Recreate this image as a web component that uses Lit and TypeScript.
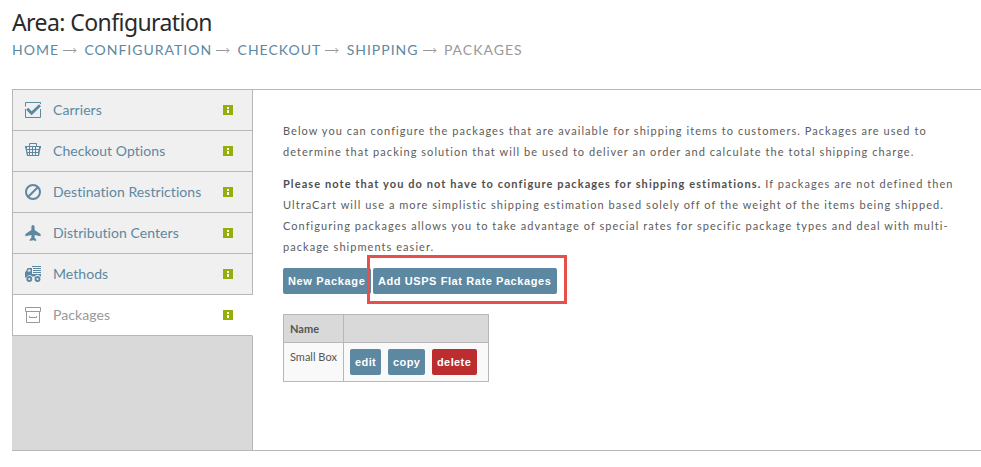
import { customElement, property } from 'lit/decorators.js';
import { classMap } from 'lit/directives/class-map.js';
import { css, html, LitElement, svg, TemplateResult } from 'lit';

const icons: Record<string, TemplateResult> = {
  check: svg`
    <path d="M0.5 4.5V0.5H15.5V2M15.5 7V15.5H0.5V7" fill="none" stroke="currentColor" />
    <path d="M2.2 6.8L6.6 11.2L15 3.2" fill="none" stroke="currentColor" stroke-width="2.8" />
  `,
  basket: svg`
    <path d="M4.5 3V0.5H11.5V3" fill="none" stroke="currentColor" />
    <path
      fill-rule="evenodd"
      fill="currentColor"
      d="M0 3H16V5H15.6L14 13H2L0.4 5H0ZM2 4V6H4V4ZM5 4V6H7V4ZM8 4V6H10V4ZM11 4V6H14V4ZM2 7L2.4 9H4V7ZM5 7V9H7V7ZM8 7V9H10V7ZM11 7V9H13L13.6 7ZM3 10V12H4V10ZM5 10V12H7V10ZM8 10V12H10V10ZM11 10V12H13V10Z"
    />
  `,
  ban: svg`
    <circle cx="8" cy="8" r="7" fill="none" stroke="currentColor" stroke-width="2" />
    <path d="M3.2 12.8L12.8 3.2" stroke="currentColor" stroke-width="2" />
  `,
  plane: svg`
    <path
      fill="currentColor"
      d="M8 0C9 0 9.6 1 9.6 2V5L15.6 9V11.2L9.6 10V12.8L11.2 14.4V16L8 15.2L4.8 16V14.4L6.4 12.8V10L0.4 11.2V9L6.4 5V2C6.4 1 7 0 8 0Z"
    />
  `,
  truck: svg`
    <path
      fill="currentColor"
      fill-rule="evenodd"
      d="M7 0H16V1H7ZM8 2H16V3H8ZM8 4H16V5H8ZM8 6H16V7H8ZM2.6 2H7V8H16V10.5H15.4A3.4 3.4 0 0 0 9.6 10.5H7.2A3.4 3.4 0 0 0 1.4 11.5H0V6L0.8 5.4ZM3.4 3.4L2.4 5.4H5.4V3.4Z"
    />
    <circle cx="4.3" cy="13" r="2" fill="none" stroke="currentColor" stroke-width="1.9" />
    <circle cx="12.5" cy="13" r="2" fill="none" stroke="currentColor" stroke-width="1.9" />
  `,
  box: svg`
    <path
      d="M0.5 0.5H15.5V4.5H0.5ZM1.5 4.5V15.5H14.5V4.5M4.5 9V10.5H11.5V9"
      fill="none"
      stroke="currentColor"
    />
  `,
};

@customElement('menu-item')
export class MenuItem extends LitElement {
  static override styles = css`
    :host {
      display: block;
    }

    .item {
      display: flex;
      align-items: center;
      box-sizing: border-box;
      height: 41px;
      padding: 0 19px 0 12px;
      border: 1px solid #b7b7b7;
      border-top: none;
      background: #f0f0f0;
      color: #5d88a1;
      font-size: 14px;
      letter-spacing: 0.06px;
    }

    .item.active {
      border-right-color: #fff;
      background: #fff;
      color: #999;
    }

    .icon {
      width: 16px;
      height: 16px;
      margin-right: 12px;
    }

    .label {
      flex: 1;
      padding-bottom: 2px;
      white-space: nowrap;
    }

    .info {
      width: 10px;
      height: 10px;
    }
  `;

  @property()
  label: string = '';

  @property()
  icon: string = '';

  @property({ type: Boolean })
  active: boolean = false;

  override render() {
    return html`
      <div class=${classMap({ item: true, active: this.active })}>
        <svg class="icon" viewBox="0 0 16 16">${icons[this.icon]}</svg>
        <span class="label">${this.label}</span>
        <svg class="info" viewBox="0 0 10 10">
          <rect width="10" height="10" fill="#94ae0a" />
          <path d="M4 2H6V4H4ZM4 5H6V8H4Z" fill="#fff" />
        </svg>
      </div>
    `;
  }
}

@customElement('app-root')
export class AppRoot extends LitElement {
  static override styles = css`
    :host {
      display: block;
      height: 467px;
      overflow: hidden;
      background: #fff;
      color: #555;
      font-family: Lato, sans-serif;
    }

    .header {
      height: 89px;
      box-sizing: border-box;
      padding: 7px 0 0 12px;
    }

    .title {
      margin: 0;
      color: #2a2a2a;
      font: 400 23px/30px 'Noto Sans', sans-serif;
      letter-spacing: -0.58px;
    }

    .crumbs {
      display: flex;
      margin-top: 4px;
      font-size: 14px;
      line-height: 18px;
      letter-spacing: 1px;
      color: #999;
    }

    .crumb {
      color: #5d88a1;
    }

    .arrow {
      width: 14px;
      height: 18px;
      margin: 0 7.4px 0 4px;
    }

    .layout {
      display: flex;
      box-sizing: border-box;
      height: 362px;
      margin-left: 12px;
      border-top: 1px solid #b7b7b7;
      border-bottom: 1px solid #b7b7b7;
    }

    .sidebar {
      display: flex;
      flex-direction: column;
      width: 241px;
      flex: none;
    }

    .filler {
      flex: 1;
      border-right: 1px solid #b7b7b7;
      background: #d9d9d9;
    }

    .content {
      padding: 30px 0 0 30px;
      font-size: 11px;
      line-height: 21px;
      letter-spacing: 1.05px;
      white-space: nowrap;
    }

    .text {
      margin: 0 0 11px;
      color: #5c5c5c;
    }

    .text b {
      color: #505050;
      letter-spacing: 1.08px;
    }

    .actions {
      position: relative;
      display: flex;
      gap: 2px;
      margin-bottom: 20px;
    }

    .button {
      height: 26px;
      padding: 0 5px;
      border: none;
      border-radius: 2px;
      background: #5d88a1;
      color: #fff;
      font: bold 11px/26px 'Liberation Sans', sans-serif;
      letter-spacing: 0.65px;
      text-align: left;
      white-space: nowrap;
    }

    .button.danger {
      background: #bb2d2f;
    }

    .new {
      width: 88px;
    }

    .usps {
      width: 184px;
      letter-spacing: 0.58px;
    }

    .edit {
      width: 31px;
    }

    .copy {
      width: 37px;
    }

    .delete {
      width: 45px;
    }

    .row-actions .button {
      letter-spacing: 0.4px;
    }

    .highlight {
      position: absolute;
      left: 84px;
      top: -13px;
      box-sizing: border-box;
      width: 200px;
      height: 49px;
      border: 3px solid #e94f4a;
    }

    .grid {
      border-collapse: collapse;
      letter-spacing: 0;
      line-height: 15px;
      text-align: left;
    }

    .grid th,
    .grid td {
      box-sizing: border-box;
      border: 1px solid #b7b7b7;
      padding: 6px;
      vertical-align: top;
    }

    .grid th {
      height: 28px;
      background: #d9d9d9;
    }

    .grid td {
      height: 39px;
      background: #f9f9f9;
    }

    .name {
      width: 60px;
    }

    .tools {
      width: 145px;
    }

    .row-actions {
      display: flex;
      gap: 7px;
    }
  `;

  private renderArrow() {
    return html`
      <svg class="arrow" viewBox="0 0 14 18">
        <path d="M0 9.5H13M10.5 7L13 9.5L10.5 12" fill="none" stroke="#999" />
      </svg>
    `;
  }

  override render() {
    const crumbs = ['HOME', 'CONFIGURATION', 'CHECKOUT', 'SHIPPING'];
    const items = [
      { label: 'Carriers', icon: 'check' },
      { label: 'Checkout Options', icon: 'basket' },
      { label: 'Destination Restrictions', icon: 'ban' },
      { label: 'Distribution Centers', icon: 'plane' },
      { label: 'Methods', icon: 'truck' },
      { label: 'Packages', icon: 'box' },
    ];

    return html`
      <header class="header">
        <h1 class="title">Area: Configuration</h1>
        <nav class="crumbs">
          ${crumbs.map((crumb) => html`<span class="crumb">${crumb}</span>${this.renderArrow()}`)}
          <span>PACKAGES</span>
        </nav>
      </header>
      <div class="layout">
        <aside class="sidebar">
          ${items.map(
            (item) => html`
              <menu-item
                label=${item.label}
                icon=${item.icon}
                ?active=${item.label === 'Packages'}
              ></menu-item>
            `
          )}
          <div class="filler"></div>
        </aside>
        <main class="content">
          <p class="text">
            Below you can configure the packages that are available for shipping items to customers. Packages are used to<br />
            determine that packing solution that will be used to deliver an order and calculate the total shipping charge.
          </p>
          <p class="text">
            <b>Please note that you do not have to configure packages for shipping estimations.</b> If packages are not defined then<br />
            UltraCart will use a more simplistic shipping estimation based solely off of the weight of the items being shipped.<br />
            Configuring packages allows you to take advantage of special rates for specific package types and deal with multi-<br />
            package shipments easier.
          </p>
          <div class="actions">
            <button class="button new">New Package</button>
            <button class="button usps">Add USPS Flat Rate Packages</button>
            <div class="highlight"></div>
          </div>
          <table class="grid">
            <tr>
              <th class="name">Name</th>
              <th class="tools"></th>
            </tr>
            <tr>
              <td>Small Box</td>
              <td>
                <div class="row-actions">
                  <button class="button edit">edit</button>
                  <button class="button copy">copy</button>
                  <button class="button danger delete">delete</button>
                </div>
              </td>
            </tr>
          </table>
        </main>
      </div>
    `;
  }
}
